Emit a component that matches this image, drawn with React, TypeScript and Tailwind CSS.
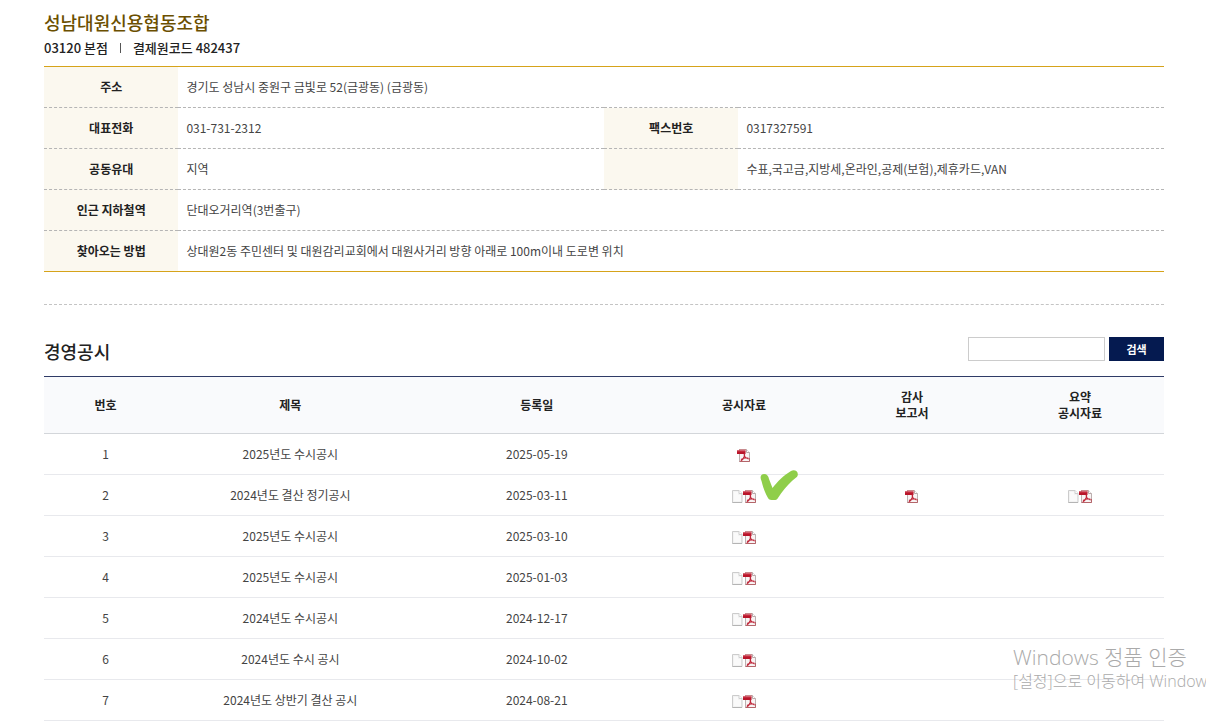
import type { ReactNode } from "react";

interface Disclosure {
    no: number;
    title: string;
    date: string;
    doc?: boolean;
    audit?: boolean;
    summary?: boolean;
    checked?: boolean;
}

const disclosures: Disclosure[] = [
    { no: 1, title: "2025년도 수시공시", date: "2025-05-19" },
    { no: 2, title: "2024년도 결산 정기공시", date: "2025-03-11", doc: true, audit: true, summary: true, checked: true },
    { no: 3, title: "2025년도 수시공시", date: "2025-03-10", doc: true },
    { no: 4, title: "2025년도 수시공시", date: "2025-01-03", doc: true },
    { no: 5, title: "2024년도 수시공시", date: "2024-12-17", doc: true },
    { no: 6, title: "2024년도 수시 공시", date: "2024-10-02", doc: true },
    { no: 7, title: "2024년도 상반기 결산 공시", date: "2024-08-21", doc: true },
];

function PdfIcon() {
    return (
        <svg width="13" height="13" viewBox="0 0 13 13" aria-hidden="true">
            <path d="M2.5.5h7l3 3v9h-10z" fill="#f8f4f4" stroke="#bcb0b0" />
            <path d="M9.5.5v3h3" fill="#fff" stroke="#b9a9a9" />
            <path d="M2.5 12.5h10V9" fill="none" stroke="#b4656a" />
            <path d="M2 .5h7" stroke="#c98a8e" />
            <path d="M0 1.5h8.5V5H0z" fill="#b9152a" />
            <path d="M0 1.5h8.5v1H0z" fill="#cf4050" />
            <path d="M6.8 4.5c1.1 0 .9 2 .3 3.4-.7 1.7-1.9 3.4-3.3 3.9M7 5.5c.4 2.2 1.7 3.8 4.7 4.4M4 10.5c1.8-1.3 4.3-1.8 7.3-1.3" fill="none" stroke="#c0273a" strokeWidth="1.2" />
        </svg>
    );
}

function PageIcon() {
    return (
        <svg width="11" height="13" viewBox="0 0 11 13" aria-hidden="true">
            <path d="M.5.5H7l3 3v9H.5z" fill="#f3f3f3" stroke="#ccc" />
            <path d="M2 2h4v3h3v6H2z" fill="#fafafa" />
            <path d="M7 .5v3h3" fill="#fff" stroke="#d0d0d0" />
            <path d="M.5 12.5H10" stroke="#b4b4b4" />
        </svg>
    );
}

function CheckMark() {
    return (
        <svg className="absolute left-full -top-5 ml-1" width="40" height="32" viewBox="0 0 40 32" aria-hidden="true">
            <path d="M1.5 11C-.5 7 1 4 4 4c3 0 4.500 2 5 5l3.500 9C17 12 24 5 31 1c4-2 8 1 6.500 5-.5 1.500-3 2.500-5 4.500C27 15.500 22 21.500 18 28c-1 1.800-2 2-4.500 2S9 30 8 28C5 22.500 3 17 1.500 11z" fill="#8fce4a" />
        </svg>
    );
}

function Files({ doc, checked }: { doc?: boolean; checked?: boolean }) {
    return (
        <div className="relative mx-auto mt-0.5 flex w-fit items-center">
            {doc && <a href="#" aria-label="문서 파일"><PageIcon /></a>}
            <a href="#" aria-label="PDF 파일"><PdfIcon /></a>
            {checked && <CheckMark />}
        </div>
    );
}

function InfoTh({ children }: { children?: ReactNode }) {
    return <th scope="row" className="bg-[#fbf8ef] text-center font-bold text-[#222]">{children}</th>;
}

function InfoTd({ children, span }: { children: ReactNode; span?: number }) {
    return <td colSpan={span} className="px-2">{children}</td>;
}

export default function App() {
    return (
        <div className="relative overflow-hidden bg-white pr-[42px] pb-1 pl-11 font-['Noto_Sans_CJK_KR','Noto_Sans',sans-serif] text-xs font-normal text-[#444]">
            <h1 className="pt-2 text-lg leading-7 font-medium text-[#6b4f00]">성남대원신용협동조합</h1>
            <p className="flex items-center pt-px pb-[7px] text-[13px] leading-[22px] font-medium text-[#222]">
                <span>03120 본점</span>
                <span className="mx-3 h-[10px] w-px bg-[#555]" />
                <span>결제원코드 482437</span>
            </p>

            <table className="w-full table-fixed border-collapse border-y border-[#d6a31a]">
                <colgroup>
                    <col className="w-[12%]" />
                    <col className="w-[38%]" />
                    <col className="w-[12%]" />
                    <col className="w-[38%]" />
                </colgroup>
                <tbody className="[&>tr]:h-[41px] [&>tr:not(:last-child)>*]:border-b [&>tr:not(:last-child)>*]:border-dashed [&>tr:not(:last-child)>*]:border-[#b5b5b5]">
                    <tr>
                        <InfoTh>주소</InfoTh>
                        <InfoTd span={3}>경기도 성남시 중원구 금빛로 52(금광동) (금광동)</InfoTd>
                    </tr>
                    <tr>
                        <InfoTh>대표전화</InfoTh>
                        <InfoTd>031-731-2312</InfoTd>
                        <InfoTh>팩스번호</InfoTh>
                        <InfoTd>0317327591</InfoTd>
                    </tr>
                    <tr>
                        <InfoTh>공동유대</InfoTh>
                        <InfoTd>지역</InfoTd>
                        <InfoTh />
                        <InfoTd>수표,국고금,지방세,온라인,공제(보험),제휴카드,VAN</InfoTd>
                    </tr>
                    <tr>
                        <InfoTh>인근 지하철역</InfoTh>
                        <InfoTd span={3}>단대오거리역(3번출구)</InfoTd>
                    </tr>
                    <tr>
                        <InfoTh>찾아오는 방법</InfoTh>
                        <InfoTd span={3}>상대원2동 주민센터 및 대원감리교회에서 대원사거리 방향 아래로 100m이내 도로변 위치</InfoTd>
                    </tr>
                </tbody>
            </table>

            <div className="mt-8 flex items-center justify-between border-t border-dashed border-[#c4c4c4] pt-8 pb-[15px]">
                <h2 className="h-6 text-lg leading-7 font-medium text-[#222]">경영공시</h2>
                <form className="flex gap-1" onSubmit={(e) => e.preventDefault()}>
                    <input type="text" aria-label="검색어" className="h-6 w-[137px] border border-[#ccc] bg-white px-2" />
                    <button type="submit" className="h-6 w-[55px] bg-[#051a50] text-[11px] font-bold text-white">검색</button>
                </form>
            </div>

            <table className="w-full table-fixed border-collapse border-t border-[#2f3b66] text-center">
                <colgroup>
                    <col className="w-[11%]" />
                    <col className="w-[22%]" />
                    <col className="w-[22%]" />
                    <col className="w-[15%]" />
                    <col className="w-[15%]" />
                    <col className="w-[15%]" />
                </colgroup>
                <thead>
                    <tr className="h-[57px] border-b border-[#d3d6da] bg-[#f9fafc] leading-4 text-[#222] [&>th]:font-bold">
                        <th scope="col">번호</th>
                        <th scope="col">제목</th>
                        <th scope="col">등록일</th>
                        <th scope="col">공시자료</th>
                        <th scope="col">감사<br />보고서</th>
                        <th scope="col">요약<br />공시자료</th>
                    </tr>
                </thead>
                <tbody>
                    {disclosures.map((row) => (
                        <tr key={row.no} className="h-[41px] border-b border-[#e8e9ed]">
                            <td>{row.no}</td>
                            <td>{row.title}</td>
                            <td>{row.date}</td>
                            <td><Files doc={row.doc} checked={row.checked} /></td>
                            <td>{row.audit && <Files />}</td>
                            <td>{row.summary && <Files doc />}</td>
                        </tr>
                    ))}
                </tbody>
            </table>

            {/* OS activation notice floating over the table */}
            <div className="pointer-events-none absolute bottom-[34px] left-[84%] font-['Open_Sans','Noto_Sans_CJK_KR',sans-serif] font-light whitespace-nowrap text-[#aaa]">
                <p className="text-[21px] leading-7">Windows 정품 인증</p>
                <p className="text-base leading-5">[설정]으로 이동하여 Window</p>
            </div>
        </div>
    );
}
